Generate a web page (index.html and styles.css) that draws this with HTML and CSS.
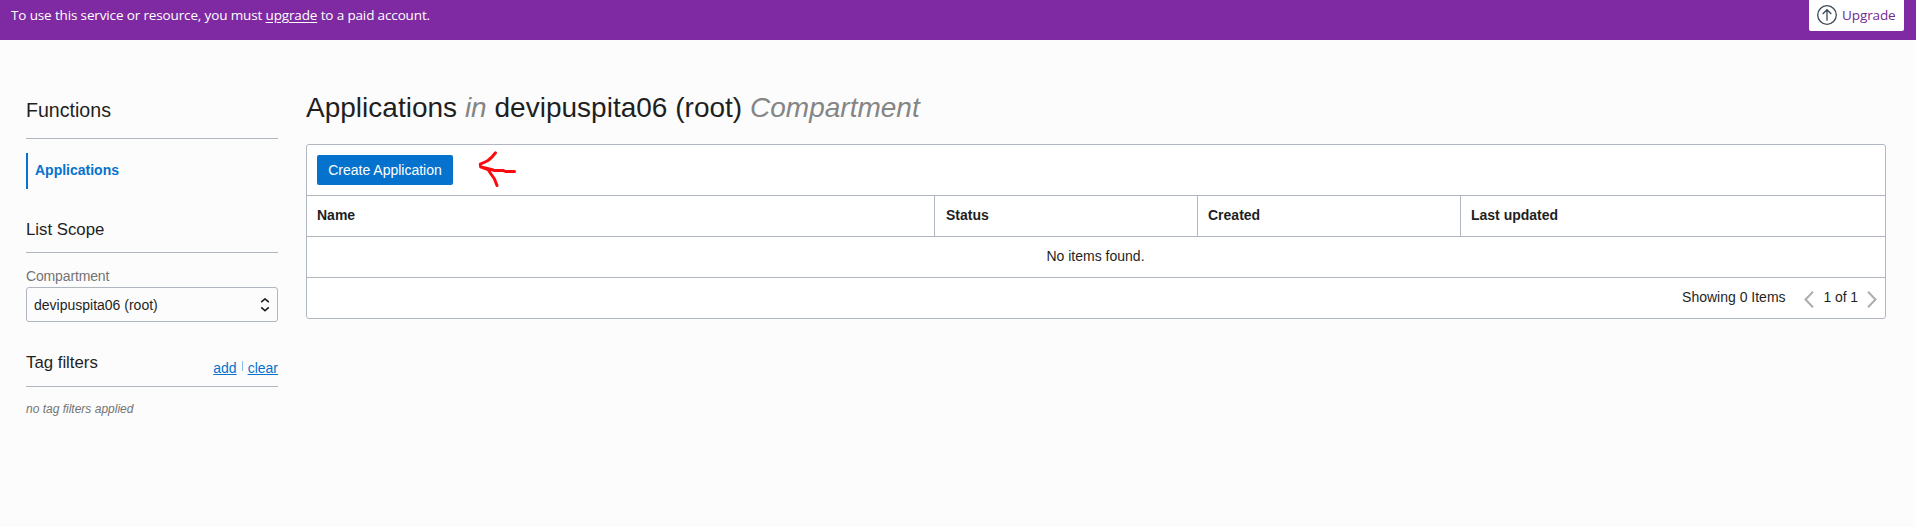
FILE: index.html
```html
<!DOCTYPE html>
<html lang="en">
<head>
<meta charset="utf-8">
<title>Functions - Applications</title>
<link rel="stylesheet" href="styles.css">
</head>
<body>
<header class="banner">
  <p class="banner-text">To use this service or resource, you must <a href="#">upgrade</a> to a paid account.</p>
  <a class="upgrade" href="#">
    <svg width="20" height="20" viewBox="0 0 20 20" fill="none" stroke="#3c4856" stroke-width="1.3"><circle cx="10" cy="10" r="9.3"/><path d="M10 15.8V4.7M5.7 9L10 4.7 14.3 9"/></svg>
    <span>Upgrade</span>
  </a>
</header>
<div class="page">
  <aside class="sidebar">
    <h2 class="service">Functions</h2>
    <nav class="nav"><a class="nav-item" href="#">Applications</a></nav>
    <h3 class="section">List Scope</h3>
    <div class="label">Compartment</div>
    <div class="select">
      <span>devipuspita06 (root)</span>
      <svg width="10" height="14" viewBox="0 0 10 14" fill="none" stroke="#1f1f1f" stroke-width="1.6"><path d="M1.2 4.2L5 .9 8.800 4.200M1.200 9.300L5 12.600 8.800 9.300"/></svg>
    </div>
    <div class="tags-head">
      <h3>Tag filters</h3>
      <div class="tag-links"><a href="#">add</a><i class="sep"></i><a href="#">clear</a></div>
    </div>
    <p class="empty-tags">no tag filters applied</p>
  </aside>
  <main class="main">
    <h1 class="title">Applications <em>in</em> devipuspita06 (root) <em>Compartment</em></h1>
    <section class="panel">
      <div class="toolbar">
        <button class="create">Create Application</button>
        <svg class="arrow" width="40" height="40" viewBox="0 0 40 40" fill="none" stroke="#fb0b10" stroke-width="3" stroke-linecap="round" stroke-linejoin="round"><path d="M18.500 2.800L15 7 11 10.500 8 12 3.300 14.200 3.700 17 9.500 18.300 14.500 19.500 17.500 20.600H26.500L28.500 21.500H37.500M5.500 17.500L11 19.500 14 24 17.500 29 20 35.500"/></svg>
      </div>
      <div class="row head"><div>Name</div><div>Status</div><div>Created</div><div>Last updated</div></div>
      <div class="none">No items found.</div>
      <div class="footer">
        <span class="count">Showing 0 Items</span>
        <svg class="chev" width="10" height="17" viewBox="0 0 10 17" fill="none" stroke="#adadad" stroke-width="2"><path d="M9 .8L1.500 8.500 9 16.200"/></svg>
        <span class="pages">1 of 1</span>
        <svg class="chev" width="10" height="17" viewBox="0 0 10 17" fill="none" stroke="#adadad" stroke-width="2"><path d="M1 .8L8.500 8.500 1 16.200"/></svg>
      </div>
    </section>
  </main>
</div>
</body>
</html>
```
FILE: styles.css
```css
* { box-sizing: border-box; }
body { margin: 0; min-height: 527px; background: #fcfcfc; color: #1f1f1f; font: 14px/20px "Liberation Sans", Arial, sans-serif; }
h1, h2, h3, p { margin: 0; font-weight: 400; }
.banner { display: flex; justify-content: space-between; align-items: flex-start; height: 40px; padding: 0 12px 0 11px; background: #7f2aa2; color: #fff; font-family: "Open Sans", "Noto Sans", sans-serif; }
.banner-text { padding-top: 5px; font-size: 13.500px; letter-spacing: -.14px; }
.banner-text a { color: inherit; text-underline-offset: 2px; }
.upgrade { display: flex; gap: 5px; width: 95px; height: 31px; padding: 5px 0 0 8px; border-radius: 0 0 2px 2px; background: #fff; color: #6f2b91; font-size: 13.500px; letter-spacing: -.1px; text-decoration: none; }
.page { display: flex; gap: 28px; padding: 50px 30px 0 26px; }
.sidebar { width: 252px; padding-top: 8px; }
.service { height: 41px; border-bottom: 1px solid #b1b7c1; font-size: 19.600px; line-height: 24px; }
.nav { padding-top: 14px; }
.nav-item { display: block; height: 36px; padding-left: 7px; border-left: 2px solid #0572ce; color: #0572ce; font-weight: 700; line-height: 35px; text-decoration: none; }
.section { height: 34px; margin-top: 30px; border-bottom: 1px solid #b1b7c1; font-size: 16.800px; line-height: 22px; }
.label { margin-top: 13px; color: #747474; line-height: 20px; height: 21px; letter-spacing: -.15px; }
.select { display: flex; justify-content: space-between; align-items: center; height: 35px; padding: 0 7px; border: 1px solid #b1b7c1; border-radius: 3px; }
.tags-head { display: flex; justify-content: space-between; height: 35px; margin-top: 30px; border-bottom: 1px solid #b1b7c1; }
.tags-head h3 { font-size: 16.800px; line-height: 22px; }
.tag-links { display: flex; padding-top: 6px; }
.tag-links a { color: #0572ce; }
.sep { width: 1px; height: 10px; margin: 3px 5px 0; background: #8ebfe4; }
.empty-tags { margin-top: 12px; color: #747474; font-size: 12px; font-style: italic; }
.main { flex: 1; }
.title { height: 54px; font-size: 28px; line-height: 36px; letter-spacing: .01px; }
.title em { color: #858585; }
.panel { height: 175px; border: 1px solid #b1b7c1; border-radius: 3px; background: #fff; }
.toolbar { display: flex; gap: 24px; height: 50px; padding: 10px 10px 0; }
.create { width: 136px; height: 30px; padding: 0; border: 0; border-radius: 2px; background: #0572ce; color: #fff; font: 14px/30px "Liberation Sans", Arial, sans-serif; }
.arrow { margin-top: -5px; }
.row { display: grid; grid-template-columns: 627px 263px 263px 1fr; height: 42px; border-top: 1px solid #b1b7c1; border-bottom: 1px solid #b1b7c1; font-weight: 700; line-height: 39px; }
.row div { padding-left: 10px; border-left: 1px solid #b1b7c1; }
.row div:first-child { border-left: 0; }
.row div:nth-child(2) { padding-left: 11px; }
.none { height: 41px; padding-right: 1px; border-bottom: 1px solid #b1b7c1; line-height: 39px; text-align: center; }
.footer { display: flex; justify-content: flex-end; height: 40px; padding-right: 8px; line-height: 38px; }
.count { margin-right: 18px; }
.chev { margin-top: 13px; }
.pages { margin: 0 9px 0 10px; letter-spacing: -.1px; }
```
